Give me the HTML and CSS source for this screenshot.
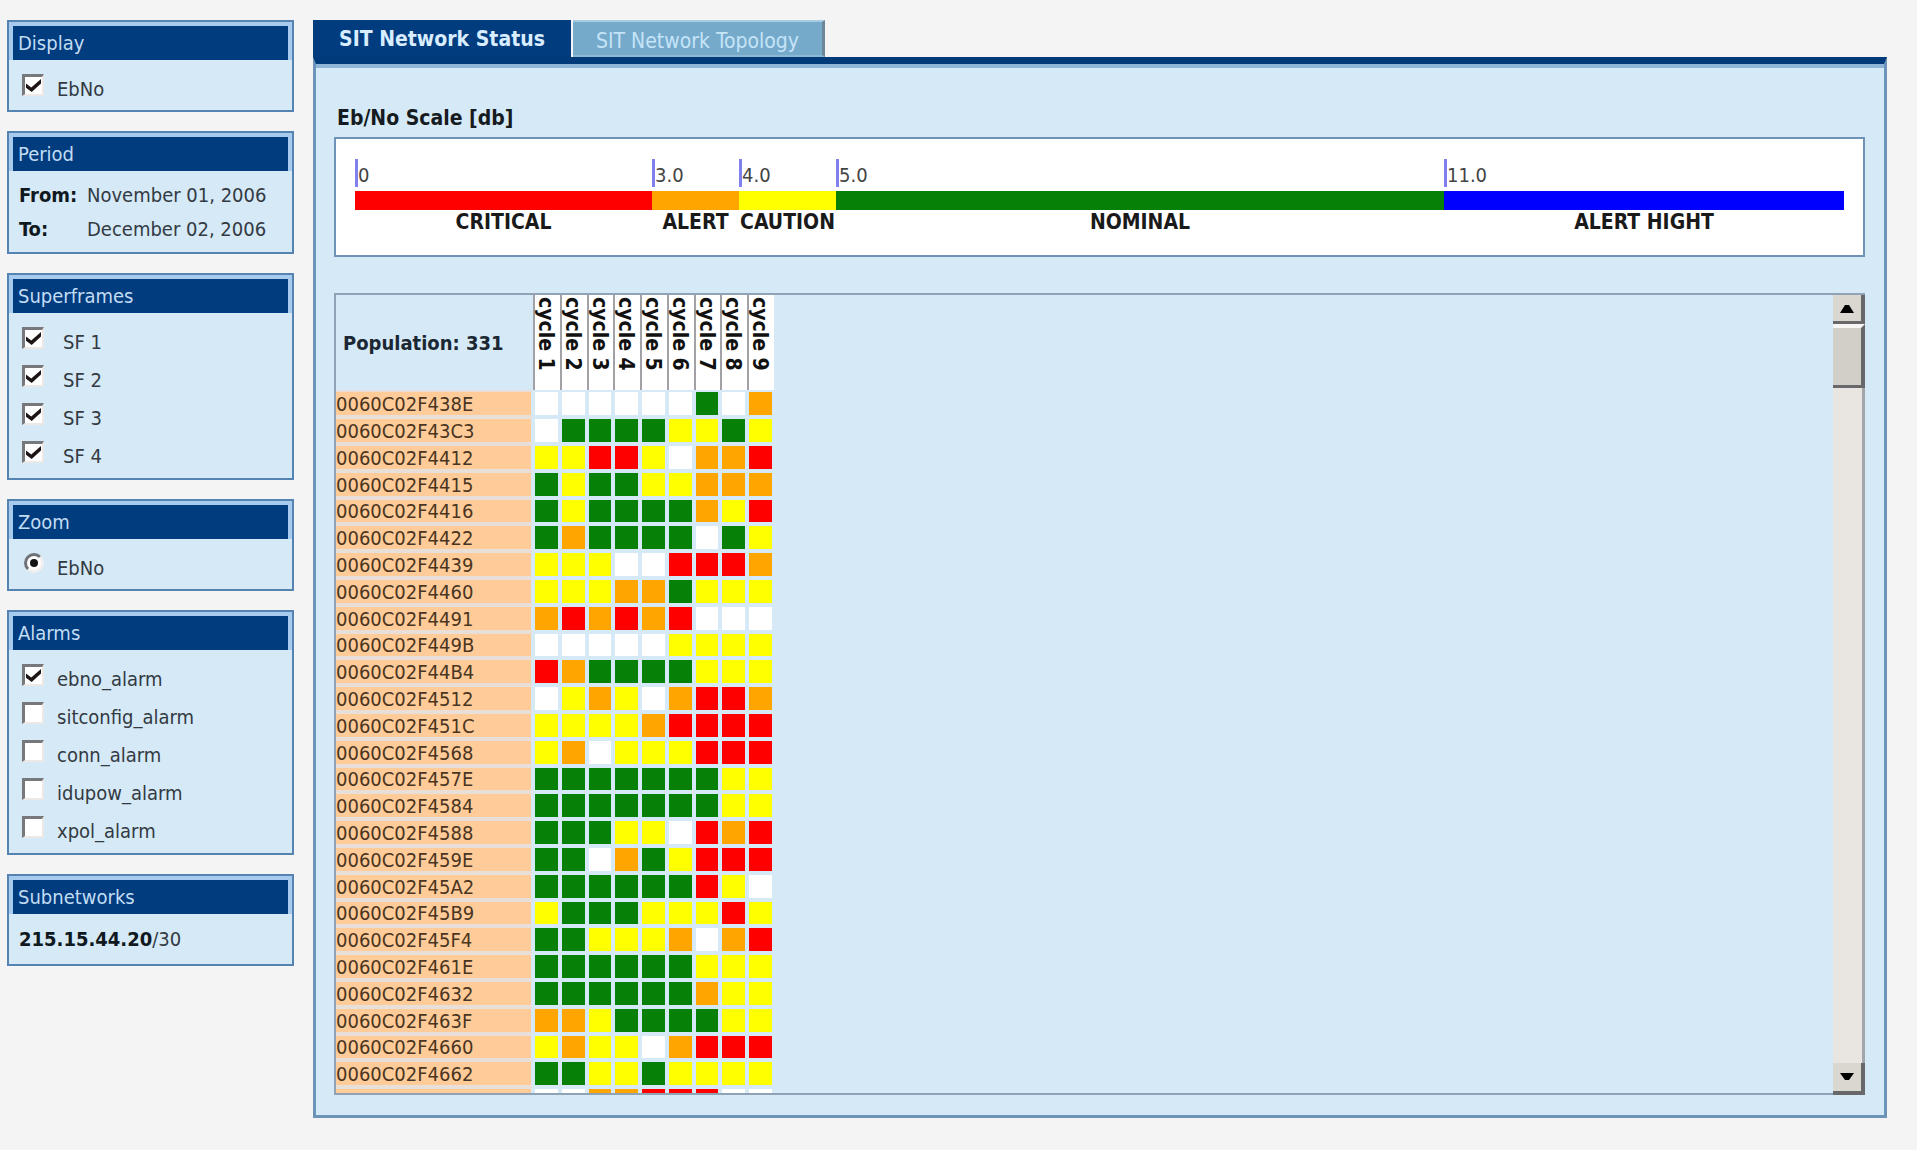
FILE: index.html
```html
<!DOCTYPE html>
<html lang="en">
<head>
<meta charset="utf-8">
<title>SIT Network Status</title>
<link rel="stylesheet" href="styles.css">
</head>
<body>
<div class="page">
  <aside class="sidebar">
    <section class="card">
      <h2 class="card-title">Display</h2>
      <div class="options">
        <label class="option"><input type="checkbox" class="tick" checked><span>EbNo</span></label>
      </div>
    </section>
    <section class="card">
      <h2 class="card-title">Period</h2>
      <dl class="period">
        <dt>From:</dt><dd>November 01, 2006</dd>
        <dt>To:</dt><dd>December 02, 2006</dd>
      </dl>
    </section>
    <section class="card">
      <h2 class="card-title">Superframes</h2>
      <div class="options options-list options-wide">
        <label class="option"><input type="checkbox" class="tick" checked><span>SF 1</span></label>
        <label class="option"><input type="checkbox" class="tick" checked><span>SF 2</span></label>
        <label class="option"><input type="checkbox" class="tick" checked><span>SF 3</span></label>
        <label class="option"><input type="checkbox" class="tick" checked><span>SF 4</span></label>
      </div>
    </section>
    <section class="card">
      <h2 class="card-title">Zoom</h2>
      <div class="options">
        <label class="option"><input type="radio" name="zoom" class="dot" checked><span>EbNo</span></label>
      </div>
    </section>
    <section class="card">
      <h2 class="card-title">Alarms</h2>
      <div class="options options-list">
        <label class="option"><input type="checkbox" class="tick" checked><span>ebno_alarm</span></label>
        <label class="option"><input type="checkbox" class="tick"><span>sitconfig_alarm</span></label>
        <label class="option"><input type="checkbox" class="tick"><span>conn_alarm</span></label>
        <label class="option"><input type="checkbox" class="tick"><span>idupow_alarm</span></label>
        <label class="option"><input type="checkbox" class="tick"><span>xpol_alarm</span></label>
      </div>
    </section>
    <section class="card">
      <h2 class="card-title">Subnetworks</h2>
      <p class="subnet"><b>215.15.44.20</b>/30</p>
    </section>
  </aside>

  <main class="main">
    <nav class="tabs">
      <button type="button" class="tab tab-active">SIT Network Status</button>
      <button type="button" class="tab tab-idle">SIT Network Topology</button>
    </nav>
    <div class="panel">
      <h1 class="scale-title">Eb/No Scale [db]</h1>
      <div class="scale">
        <div class="band band-critical"><span class="mark">0</span><span class="bar"></span><b>CRITICAL</b></div>
        <div class="band band-alert"><span class="mark">3.0</span><span class="bar"></span><b>ALERT</b></div>
        <div class="band band-caution"><span class="mark">4.0</span><span class="bar"></span><b>CAUTION</b></div>
        <div class="band band-nominal"><span class="mark">5.0</span><span class="bar"></span><b>NOMINAL</b></div>
        <div class="band band-high"><span class="mark">11.0</span><span class="bar"></span><b>ALERT HIGHT</b></div>
      </div>
      <div class="grid-box">
        <div class="grid-view">
          <table class="status">
            <thead>
              <tr>
                <th class="population" scope="col">Population: 331</th>
                <th class="cycle" scope="col"><span>cycle 1</span></th>
                <th class="cycle" scope="col"><span>cycle 2</span></th>
                <th class="cycle" scope="col"><span>cycle 3</span></th>
                <th class="cycle" scope="col"><span>cycle 4</span></th>
                <th class="cycle" scope="col"><span>cycle 5</span></th>
                <th class="cycle" scope="col"><span>cycle 6</span></th>
                <th class="cycle" scope="col"><span>cycle 7</span></th>
                <th class="cycle" scope="col"><span>cycle 8</span></th>
                <th class="cycle" scope="col"><span>cycle 9</span></th>
              </tr>
            </thead>
            <tbody id="rows"></tbody>
          </table>
        </div>
        <div class="scrollbar">
          <button type="button" class="step step-up" aria-label="Scroll up"><svg width="14" height="9" viewBox="0 0 14 9"><path d="M0 9 5 1h4l5 8z"/></svg></button>
          <div class="thumb"></div>
          <button type="button" class="step step-down" aria-label="Scroll down"><svg width="14" height="8" viewBox="0 0 14 8"><path d="M0 0h14L9 7H5z"/></svg></button>
        </div>
      </div>
    </div>
  </main>
</div>
<script src="grid.js"></script>
</body>
</html>
```

FILE: styles.css
```css
* { box-sizing: border-box; }

html { background: #fff; }

body {
  margin: 0;
  height: 100vh;
  padding: 0 3px 3px 0;
  font: 20px/34px "DejaVu Sans Condensed", "DejaVu Sans", sans-serif;
  color: #333a42;
}

h1, h2, p, dl, dd { margin: 0; }

button { font: inherit; border: 0; padding: 0; }

.page {
  display: flex;
  gap: 19px;
  height: 100%;
  padding: 20px 30px 32px 7px;
  background: #f4f4f4;
}

/* Side panels */
.sidebar {
  display: flex;
  flex-direction: column;
  gap: 19px;
  flex: 0 0 287px;
}

.card {
  border: 2px solid #5584b2;
  background: #d5e9f7;
}

.card-title {
  height: 38px;
  padding-left: 5px;
  border: 4px solid #a6cbee;
  border-bottom: 0;
  background: #003c7e;
  color: #c2dcf4;
  font-size: 20px;
  font-weight: normal;
  line-height: 34px;
}

.options { padding: 6px 0 6px 13px; }
.options-list { padding-bottom: 7px; }

.option {
  display: flex;
  gap: 13px;
  height: 38px;
}
.options-wide .option { gap: 19px; }
.option span { padding-top: 6px; }

.tick, .dot {
  appearance: none;
  display: grid;
  place-items: center;
  flex: none;
  width: 22px;
  height: 22px;
  margin: 8px 0 0;
  background: #fff;
}

.tick {
  border: 2px solid #ece8e6;
  border-top: 3px solid #77787c;
  border-left: 3px solid #77787c;
}

.tick:checked::before {
  content: "";
  width: 15px;
  height: 13px;
  background: #1d1414;
  clip-path: polygon(0 35%, 35% 65%, 100% 0, 100% 35%, 38% 100%, 0 68%);
}

.dot {
  width: 20px;
  height: 20px;
  margin-left: 2px;
  border: 3px solid #f2f0ee;
  border-top-color: #6f7276;
  border-left-color: #6f7276;
  border-radius: 50%;
}
.dot + span { padding-left: 0; }

.dot:checked::before {
  content: "";
  width: 8px;
  height: 8px;
  border-radius: 50%;
  background: #141414;
}

.period {
  display: grid;
  grid-template-columns: 68px 1fr;
  padding: 7px 0 6px 10px;
}
.period dt, .subnet b { font-weight: bold; color: #101820; }

.subnet { padding: 8px 10px; }

/* Tabs */
.main {
  display: flex;
  flex-direction: column;
  flex: 1;
  min-width: 0;
}

.tabs {
  display: flex;
  gap: 2px;
  height: 37px;
}

.tab { height: 37px; font-size: 21px; line-height: 38px; }

.tab-active {
  flex: 0 0 258px;
  background: #003c7e;
  color: #d8edff;
  font-weight: bold;
}

.tab-idle {
  flex: 0 0 252px;
  border-top: 2px solid #a8cde2;
  border-right: 3px solid #6d8799;
  border-bottom: 2px solid #8cb8d4;
  background: #76aacb;
  color: #c5e4f8;
}

.panel {
  display: flex;
  flex-direction: column;
  flex: 1;
  min-height: 0;
  padding: 0 19px 20px 18px;
  border: 3px solid #6c94b8;
  border-top: 7px solid #003a78;
  background: #d5e9f7;
  box-shadow: inset 0 4px 0 #8fb6d6;
}

.scale-title {
  padding: 35px 0 0 3px;
  color: #151b20;
  font-size: 21px;
  line-height: 38px;
}

/* Signal level scale */
.scale {
  display: grid;
  grid-template-columns: 297fr 87fr 97fr 608fr 400fr;
  height: 120px;
  padding: 20px 19px 0;
  border: 2px solid #6f93b6;
  background: #fff;
}

.band {
  display: flex;
  flex-direction: column;
  align-items: center;
  color: #1a1a1a;
  font-size: 21px;
  line-height: 24px;
}

.mark {
  align-self: stretch;
  height: 28px;
  margin-bottom: 4px;
  padding-top: 2px;
  border-left: 3px solid #8080ee;
  color: #444;
  font-size: 20px;
  line-height: 28px;
}

.bar { align-self: stretch; height: 19px; }
.band-critical .bar { background: #f00; }
.band-alert .bar { background: #ffa500; }
.band-caution .bar { background: #ff0; }
.band-nominal .bar { background: #078007; }
.band-high .bar { background: #00f; }

/* Status grid */
.grid-box {
  display: flex;
  flex: 1;
  min-height: 0;
  margin-top: 36px;
  border: 2px solid #8fa2b6;
  border-right-width: 0;
}

.grid-view { flex: 1; overflow: hidden; }

.status {
  width: 438px;
  table-layout: fixed;
  border-collapse: separate;
  border-spacing: 0;
}

.status th, .status td { padding: 0; }

.status .population {
  width: 197px;
  height: 95px;
  padding-left: 7px;
  color: #1b2733;
  text-align: left;
}

.cycle {
  background: #fff;
  border-left: 2px solid #a2a2a6;
  color: #111;
  vertical-align: top;
}

.cycle span {
  display: block;
  writing-mode: vertical-rl;
  padding-top: 2px;
  font-size: 21px;
  line-height: 22px;
}

.status tbody tr { height: 27px; }
.status tbody tr:nth-child(5n) { height: 26px; }

.status tbody th {
  border-right: 2px solid #d5e9f7;
  border-bottom: 2px solid #e8e0d8;
  border-top: 2px solid #e8e0d8;
  background: #fc9;
  color: #4a3521;
  font-weight: normal;
  line-height: 22px;
  text-align: left;
}

.status tbody td {
  border: 2px solid transparent;
  background: #fff padding-box;
}
.status td.critical { background-color: #f00; }
.status td.alert { background-color: #ffa500; }
.status td.caution { background-color: #ff0; }
.status td.nominal { background-color: #078007; }

/* Scroll bar */
.scrollbar {
  display: flex;
  flex-direction: column;
  flex: 0 0 32px;
  border-right: 3px solid #a2a6aa;
  background: #e9e6e2;
}

.step, .thumb {
  flex: none;
  margin-right: -3px;
  background: #dad6d0;
  border-right: 4px solid #68686a;
  border-bottom: 3px solid #68686a;
}

.step {
  display: grid;
  place-items: center;
  height: 29px;
}

.step-down { height: 32px; margin-top: auto; margin-bottom: -2px; border-bottom-width: 4px; }

.thumb { height: 64px; border-top: 4px solid #f8f6f4; background: #d2cec8; }
```

FILE: grid.js
```js
// One row per terminal: name, then a level letter for each of the nine cycles.
const levels = { R: "critical", O: "alert", Y: "caution", G: "nominal" };
const terminals = [
  ["0060C02F438E", "------G-O"],
  ["0060C02F43C3", "-GGGGYYGY"],
  ["0060C02F4412", "YYRRY-OOR"],
  ["0060C02F4415", "GYGGYYOOO"],
  ["0060C02F4416", "GYGGGGOYR"],
  ["0060C02F4422", "GOGGGG-GY"],
  ["0060C02F4439", "YYY--RRRO"],
  ["0060C02F4460", "YYYOOGYYY"],
  ["0060C02F4491", "OROROR---"],
  ["0060C02F449B", "-----YYYY"],
  ["0060C02F44B4", "ROGGGGYYY"],
  ["0060C02F4512", "-YOY-ORRO"],
  ["0060C02F451C", "YYYYORRRR"],
  ["0060C02F4568", "YO-YYYRRR"],
  ["0060C02F457E", "GGGGGGGYY"],
  ["0060C02F4584", "GGGGGGGYY"],
  ["0060C02F4588", "GGGYY-ROR"],
  ["0060C02F459E", "GG-OGYRRR"],
  ["0060C02F45A2", "GGGGGGRY-"],
  ["0060C02F45B9", "YGGGYYYRY"],
  ["0060C02F45F4", "GGYYYO-OR"],
  ["0060C02F461E", "GGGGGGYYY"],
  ["0060C02F4632", "GGGGGGOYY"],
  ["0060C02F463F", "OOYGGGGYY"],
  ["0060C02F4660", "YOYY-ORRR"],
  ["0060C02F4662", "GGYYGYYYY"],
  ["", "--OORRR--"]
];

const body = document.getElementById("rows");
for (const [name, cycles] of terminals) {
  const row = body.insertRow();
  const head = document.createElement("th");
  head.scope = "row";
  head.textContent = name;
  row.append(head);
  for (const letter of cycles) {
    row.insertCell().className = levels[letter] || "";
  }
}
```
